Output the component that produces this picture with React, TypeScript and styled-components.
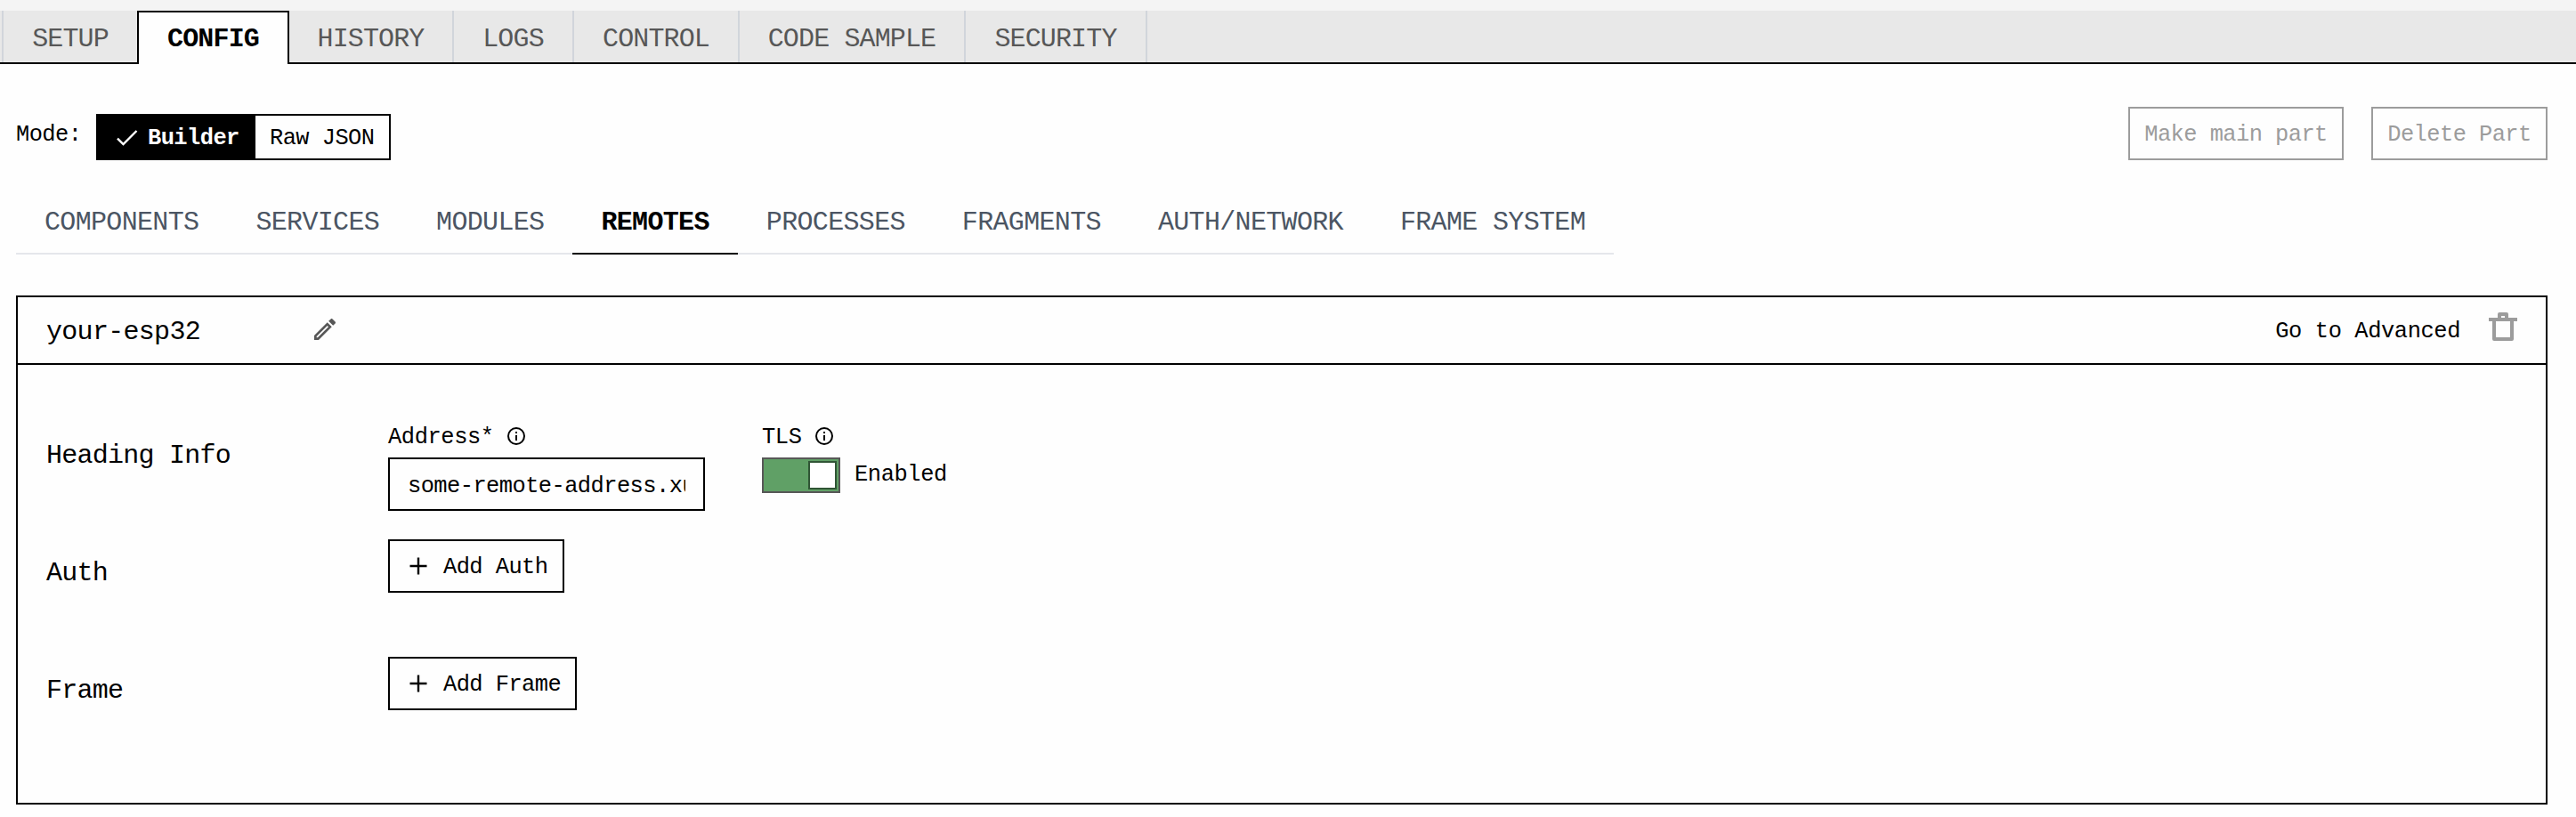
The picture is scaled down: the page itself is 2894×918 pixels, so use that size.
import React from 'react';
import styled, { createGlobalStyle, css } from 'styled-components';

const Global = createGlobalStyle`
  *, *::before, *::after { box-sizing: border-box; }
  body { margin: 0; background: #fefefe; }
  body, button, input {
    font-family: 'Liberation Mono', 'DejaVu Sans Mono', monospace;
    color: #000;
  }
  button, input { border-radius: 0; margin: 0; }
`;

const small = css`
  font-size: 25.4px;
  letter-spacing: -0.555px;
  line-height: 32px;
  white-space: pre;
`;

const large = css`
  font-size: 30px;
  letter-spacing: -0.866px;
  line-height: 36px;
  white-space: pre;
`;

const Page = styled.div`
  width: 2894px;
  height: 918px;
  overflow: hidden;
  background: #fefefe;
`;

const TopBar = styled.nav`
  display: flex;
  height: 72px;
  padding-left: 2px;
  border-top: 12px solid #f4f4f4;
  background: linear-gradient(#000, #000) bottom / 100% 2px no-repeat #e8e8e8;
`;

const TopTab = styled.button<{ $active?: boolean; $width: number; $first?: boolean }>`
  ${large}
  width: ${p => p.$width}px;
  height: ${p => (p.$active ? 60 : 58)}px;
  padding: 6px 0 0;
  border: 0 solid #d1d5db;
  border-right-width: ${p => (p.$first ? 0 : 2)}px;
  border-left-width: ${p => (p.$first ? 2 : 0)}px;
  background: transparent;
  color: #575757;
  ${p =>
    p.$active &&
    css`
      padding-top: 2px;
      border: solid #000;
      border-width: 2px 2px 0;
      background: #fefefe;
      color: #000;
      font-weight: 700;
    `}
`;

const Content = styled.main`
  padding: 48px 32px 0 18px;
`;

const ModeRow = styled.div`
  display: flex;
  justify-content: space-between;
  height: 60px;
`;

const ModeGroup = styled.div`
  display: flex;
`;

const ModeLabel = styled.span`
  ${small}
  width: 90px;
  padding-top: 16px;
`;

const Segments = styled.div`
  display: flex;
  width: 331px;
  height: 52px;
  margin-top: 8px;
  border: 2px solid #000;
`;

const Segment = styled.button<{ $active?: boolean }>`
  ${small}
  display: flex;
  align-items: center;
  gap: 10px;
  padding: 4px 0 0 ${p => (p.$active ? 20 : 16)}px;
  width: ${p => (p.$active ? 177 : 150)}px;
  border: 0;
  background: ${p => (p.$active ? '#000' : '#fefefe')};
  color: ${p => (p.$active ? '#fff' : '#000')};
  font-weight: ${p => (p.$active ? 700 : 400)};

  svg { margin-top: -4px; }
`;

const Actions = styled.div`
  display: flex;
  gap: 31px;
`;

const ActionButton = styled.button<{ $width: number }>`
  ${small}
  width: ${p => p.$width}px;
  height: 60px;
  padding: 4px 0 0;
  border: 2px solid #9c9c9c;
  background: #fefefe;
  color: #9c9c9c;
`;

const SubTabs = styled.nav`
  display: flex;
  width: 1795px;
  height: 72px;
  margin-top: 34px;
  background: linear-gradient(#e5e7eb, #e5e7eb) bottom / 100% 2px no-repeat;
`;

const SubTab = styled.button<{ $active?: boolean }>`
  ${large}
  letter-spacing: -0.666px;
  height: 72px;
  padding: 2px 32px 0;
  border: 0;
  border-bottom: 2px solid ${p => (p.$active ? '#000' : 'transparent')};
  background: transparent;
  color: ${p => (p.$active ? '#000' : '#4b5563')};
  font-weight: ${p => (p.$active ? 700 : 400)};
`;

const Card = styled.section`
  height: 572px;
  margin-top: 46px;
  border: 2px solid #000;
`;

const CardHeader = styled.header`
  display: flex;
  align-items: flex-start;
  height: 76px;
  padding: 0 32px;
  border-bottom: 2px solid #000;
`;

const RemoteName = styled.h2`
  ${large}
  letter-spacing: -0.7px;
  width: 297px;
  margin: 21px 0 0;
  font-weight: 400;
`;

const EditButton = styled.button`
  display: flex;
  margin-top: 20px;
  padding: 0;
  border: 0;
  background: none;
`;

const AdvancedButton = styled.button`
  ${small}
  letter-spacing: -0.4px;
  margin: 23px 32px 0 auto;
  padding: 0;
  border: 0;
  background: none;
`;

const TrashButton = styled.button`
  display: flex;
  margin-top: 17px;
  padding: 0;
  border: 0;
  background: none;
`;

const Row = styled.div<{ $height: number; $offset?: number }>`
  display: grid;
  grid-template-columns: 384px 356px 1fr;
  height: ${p => p.$height}px;
  padding: ${p => p.$offset ?? 0}px 32px 0;
`;

const RowTitle = styled.h3`
  ${large}
  letter-spacing: -0.75px;
  margin: 20px 0 0;
  font-weight: 400;
`;

const Field = styled.div<{ $indent?: number }>`
  display: flex;
  flex-direction: column;
  align-items: flex-start;
  margin-left: ${p => p.$indent ?? 0}px;
`;

const FieldLabel = styled.label`
  ${small}
  letter-spacing: -0.4px;
  display: flex;
  align-items: center;
  height: 32px;
  padding-top: 4px;
  gap: 15px;

  svg { margin-top: -4px; }
`;

const TextInput = styled.input`
  ${small}
  width: 356px;
  height: 60px;
  margin-top: 8px;
  padding: 4px 20px 0;
  border: 2px solid #000;
  background: #fefefe;
  outline: 0;
`;

const SwitchRow = styled.div`
  ${small}
  letter-spacing: -0.4px;
  display: flex;
  align-items: center;
  gap: 16px;
  height: 40px;
  margin-top: 8px;
`;

const SwitchTrack = styled.span`
  display: flex;
  justify-content: flex-end;
  width: 88px;
  height: 40px;
  padding: 2px;
  border: 2px solid #575757;
  background: #60a066;
`;

const SwitchKnob = styled.span`
  width: 32px;
  height: 32px;
  border: 2px solid #305535;
  background: #fff;
`;

const AddButton = styled.button<{ $width: number }>`
  ${small}
  display: flex;
  align-items: center;
  gap: 18px;
  width: ${p => p.$width}px;
  height: 60px;
  padding: 4px 0 0 22px;
  border: 2px solid #000;
  background: #fefefe;

  svg { margin-top: -4px; }
`;

const CheckIcon = () => (
  <svg width="26" height="24" viewBox="0 0 26 24" fill="none" stroke="currentColor" strokeWidth="2.4">
    <path d="M2 13.7l6.5 6.3L23.5 5" />
  </svg>
);

const PencilIcon = () => (
  <svg width="32" height="32" viewBox="0 0 24 24" fill="#575757">
    <path d="M14.06 9.02l.92.92L5.92 19H5v-.92l9.06-9.06M17.66 3c-.25 0-.51.1-.7.29l-1.83 1.83 3.75 3.75 1.83-1.83c.39-.39.39-1.02 0-1.41l-2.34-2.34c-.2-.2-.45-.29-.71-.29zm-3.6 3.19L3 17.25V21h3.75L17.81 9.94l-3.75-3.75z" />
  </svg>
);

const TrashIcon = () => (
  <svg width="32" height="34" viewBox="0 0 32 34" fill="none" stroke="#9c9c9c" strokeWidth="4" strokeLinejoin="round">
    <path d="M0 8h32" />
    <path d="M12 8V2h8v6" />
    <path d="M6 8v22h20V8" />
  </svg>
);

const InfoIcon = () => (
  <svg width="20" height="20" viewBox="0 0 20 20" fill="none" stroke="#000" strokeWidth="2">
    <circle cx="10" cy="10" r="9" />
    <path d="M10 9v6M10 5v2" />
  </svg>
);

const PlusIcon = () => (
  <svg width="20" height="20" viewBox="0 0 20 20" fill="none" stroke="#000" strokeWidth="2.4">
    <path d="M10 0.5v19M0.5 10h19" />
  </svg>
);

const topTabs = [
  { label: 'SETUP', width: 152 },
  { label: 'CONFIG', width: 171, active: true },
  { label: 'HISTORY', width: 185 },
  { label: 'LOGS', width: 135 },
  { label: 'CONTROL', width: 186 },
  { label: 'CODE SAMPLE', width: 254 },
  { label: 'SECURITY', width: 204 },
];

const subTabs = [
  'COMPONENTS', 'SERVICES', 'MODULES', 'REMOTES',
  'PROCESSES', 'FRAGMENTS', 'AUTH/NETWORK', 'FRAME SYSTEM',
];

export default function App() {
  return (
    <Page>
      <Global />
      <TopBar>
        {topTabs.map((t, i) => (
          <TopTab key={t.label} $width={t.width} $active={t.active} $first={i === 0}>{t.label}</TopTab>
        ))}
      </TopBar>
      <Content>
        <ModeRow>
          <ModeGroup>
            <ModeLabel>Mode:</ModeLabel>
            <Segments>
              <Segment $active><CheckIcon />Builder</Segment>
              <Segment>Raw JSON</Segment>
            </Segments>
          </ModeGroup>
          <Actions>
            <ActionButton $width={242}>Make main part</ActionButton>
            <ActionButton $width={198}>Delete Part</ActionButton>
          </Actions>
        </ModeRow>
        <SubTabs>
          {subTabs.map(t => <SubTab key={t} $active={t === 'REMOTES'}>{t}</SubTab>)}
        </SubTabs>
        <Card>
          <CardHeader>
            <RemoteName>your-esp32</RemoteName>
            <EditButton aria-label="Rename"><PencilIcon /></EditButton>
            <AdvancedButton>Go to Advanced</AdvancedButton>
            <TrashButton aria-label="Delete remote"><TrashIcon /></TrashButton>
          </CardHeader>
          <Row $height={196} $offset={64}>
            <RowTitle>Heading Info</RowTitle>
            <Field>
              <FieldLabel>Address*<InfoIcon /></FieldLabel>
              <TextInput defaultValue="some-remote-address.xuuu" />
            </Field>
            <Field $indent={64}>
              <FieldLabel>TLS<InfoIcon /></FieldLabel>
              <SwitchRow>
                <SwitchTrack><SwitchKnob /></SwitchTrack>
                Enabled
              </SwitchRow>
            </Field>
          </Row>
          <Row $height={132}>
            <RowTitle>Auth</RowTitle>
            <Field><AddButton $width={198}><PlusIcon />Add Auth</AddButton></Field>
          </Row>
          <Row $height={132}>
            <RowTitle>Frame</RowTitle>
            <Field><AddButton $width={212}><PlusIcon />Add Frame</AddButton></Field>
          </Row>
        </Card>
      </Content>
    </Page>
  );
}
